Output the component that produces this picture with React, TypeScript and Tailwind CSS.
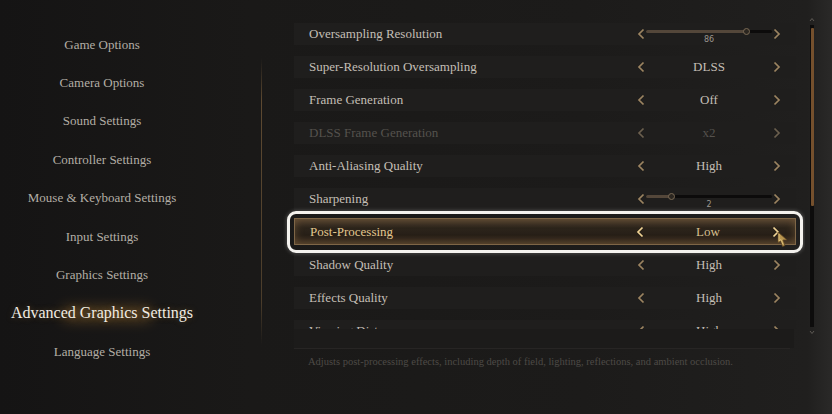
import React from "react";

type Row = {
  label: string;
  value?: string;
  slider?: { pct: number; text: string };
  disabled?: boolean;
  active?: boolean;
};

const rows: Row[] = [
  { label: "Oversampling Resolution", slider: { pct: 0.8, text: "86" } },
  { label: "Super-Resolution Oversampling", value: "DLSS" },
  { label: "Frame Generation", value: "Off" },
  { label: "DLSS Frame Generation", value: "x2", disabled: true },
  { label: "Anti-Aliasing Quality", value: "High" },
  { label: "Sharpening", slider: { pct: 0.2, text: "2" } },
  { label: "Post-Processing", value: "Low", active: true },
  { label: "Shadow Quality", value: "High" },
  { label: "Effects Quality", value: "High" },
  { label: "Viewing Distance", value: "High" },
];

const nav = [
  "Game Options",
  "Camera Options",
  "Sound Settings",
  "Controller Settings",
  "Mouse & Keyboard Settings",
  "Input Settings",
  "Graphics Settings",
  "Advanced Graphics Settings",
  "Language Settings",
];

function Chevron({ dir, color }: { dir: "l" | "r"; color: string }) {
  return (
    <svg width="10" height="12" viewBox="0 0 10 12" className="shrink-0">
      <path
        d={dir === "l" ? "M7.5 1.5 L3 6 L7.5 10.5" : "M2.5 1.5 L7 6 L2.5 10.5"}
        fill="none"
        stroke={color}
        strokeWidth="1.7"
        strokeLinejoin="miter"
      />
    </svg>
  );
}

function Cursor() {
  return (
    <svg width="13" height="18" viewBox="0 0 13 18">
      <path
        d="M2 1 L2 12 L4.5 10 L6.5 15.5 L9 14.5 L7 9 L11 9 Z"
        fill="#b8954f"
        stroke="#5a4222"
        strokeWidth="0.8"
      />
      <path d="M3 3 L3 10 L5 8.5 L7 13.5" fill="none" stroke="#e8cf8c" strokeWidth="0.7" />
    </svg>
  );
}

function SettingRow({ row }: { row: Row }) {
  const arrowColor = row.active ? "#f0d394" : row.disabled ? "#6b5f4e" : "#9c8461";
  return (
    <div className="h-[33px] flex items-center relative">
      {row.active && (
        <div className="absolute left-[-7px] right-[-7px] top-[-4px] bottom-[-5px] border-[3px] border-[#f4f2ee] rounded-[9px] shadow-[0_0_4px_rgba(255,255,255,0.3)] pointer-events-none z-10" />
      )}
      <div
        className={
          row.active
            ? "relative w-[503px] h-[27px] flex items-center border border-[#7e6647] bg-[linear-gradient(180deg,#4d3d2c_0%,#2c241b_35%,#271f17_65%,#3f3122_100%)] shadow-[inset_0_0_8px_rgba(140,105,65,0.55)]"
            : "relative w-[502px] h-[22px] flex items-center bg-[#1f1e1d]"
        }
      >
        <span
          className={
            "pl-[15px] text-[13px] leading-none " +
            (row.active ? "text-[#e2c78f]" : row.disabled ? "text-[#55524d]" : "text-[#c4bfb6]")
          }
        >
          {row.label}
        </span>
        <div className="ml-auto mr-[14px] w-[146px] flex items-center">
          <Chevron dir="l" color={arrowColor} />
          {row.slider ? (
            <div className="flex-1 flex flex-col items-stretch mt-[6px]">
              <div className="relative h-[3px] bg-[#0c0b0b] rounded-full">
                <div
                  className="absolute left-0 top-0 h-full bg-[#54473a] rounded-full"
                  style={{ width: `${row.slider.pct * 100}%` }}
                />
                <div
                  className="absolute top-[-2px] w-[7px] h-[7px] -ml-[3.5px] rounded-full border border-[#7a6a55] bg-[#2b2620]"
                  style={{ left: `${row.slider.pct * 100}%` }}
                />
              </div>
              <div className="text-center text-[8px] leading-[8px] mt-[3px] text-[#9c978f] font-['DejaVu_Sans',sans-serif]">
                {row.slider.text}
              </div>
            </div>
          ) : (
            <span
              className={
                "flex-1 text-center text-[13px] leading-none " +
                (row.active ? "text-[#d6bf8e]" : row.disabled ? "text-[#55524d]" : "text-[#c4bfb6]")
              }
            >
              {row.value}
            </span>
          )}
          <Chevron dir="r" color={arrowColor} />
        </div>
        {row.active && (
          <div className="absolute right-[6px] top-[12px] z-20">
            <Cursor />
          </div>
        )}
      </div>
    </div>
  );
}

export default function App() {
  return (
    <div className="w-[832px] h-[414px] overflow-hidden flex font-['Liberation_Serif',serif] bg-[linear-gradient(90deg,#151414_0%,#1a1918_30%,#1c1b1a_70%,#201f1e_97%,#2a2928_100%)]">
      {/* Left navigation */}
      <nav className="w-[204px] pt-[25px] flex flex-col shrink-0">
        {nav.map((n) => {
          const active = n === "Advanced Graphics Settings";
          return (
            <div key={n} className="h-[38.4px] flex items-center justify-center relative">
              {active && (
                <div className="absolute left-[62px] top-[14px] w-[90px] h-[12px] rounded-full bg-[#b07a30] opacity-45 blur-[7px]" />
              )}
              <span
                className={
                  "relative leading-none whitespace-nowrap " +
                  (active
                    ? "text-[16px] text-[#f1ece3] [text-shadow:0_0_6px_rgba(200,150,70,0.35)]"
                    : "text-[13px] text-[#b3aea5]")
                }
              >
                {n}
              </span>
            </div>
          );
        })}
      </nav>

      {/* Divider */}
      <div className="w-[58px] shrink-0 pt-[58px]">
        <div className="ml-[57px] w-px h-[287px] bg-[linear-gradient(180deg,rgba(110,85,55,0)_0%,rgba(110,85,55,0.8)_15%,rgba(95,75,50,0.7)_85%,rgba(110,85,55,0)_100%)]" />
      </div>

      {/* Content */}
      <div className="ml-[18px] w-[525px] shrink-0 flex flex-col">
        <div className="mt-[17px] h-[312px] overflow-hidden pl-[14px] pr-[9px]">
          {rows.map((r) => (
            <SettingRow key={r.label} row={r} />
          ))}
        </div>
        <div className="h-[19px] ml-[14px] w-[500px] bg-[#1c1b1a]" />
        <div className="ml-[14px] w-[496px] h-px bg-[#272524]" />
        <p className="mt-[6px] pl-[28px] text-[10.5px] leading-[14px] text-[#4d4a46] whitespace-nowrap">
          Adjusts post-processing effects, including depth of field, lighting, reflections, and ambient occlusion.
        </p>
      </div>

      {/* Scrollbar */}
      <div className="ml-[5px] w-[4px] pt-[17px] flex flex-col items-center shrink-0">
        <svg width="6" height="5" viewBox="0 0 6 5" className="mb-[3px]">
          <path d="M1 4 L3 1.5 L5 4" fill="none" stroke="#5e5a55" strokeWidth="1" />
        </svg>
        <div className="w-[4px] h-[302px] bg-[#0d0c0c] flex flex-col">
          <div className="mt-[3px] h-[178px] mx-[0.5px] bg-[#75502d] rounded-[1px]" />
        </div>
        <svg width="6" height="5" viewBox="0 0 6 5" className="mt-[3px]">
          <path d="M1 1 L3 3.5 L5 1" fill="none" stroke="#5e5a55" strokeWidth="1" />
        </svg>
      </div>
    </div>
  );
}
